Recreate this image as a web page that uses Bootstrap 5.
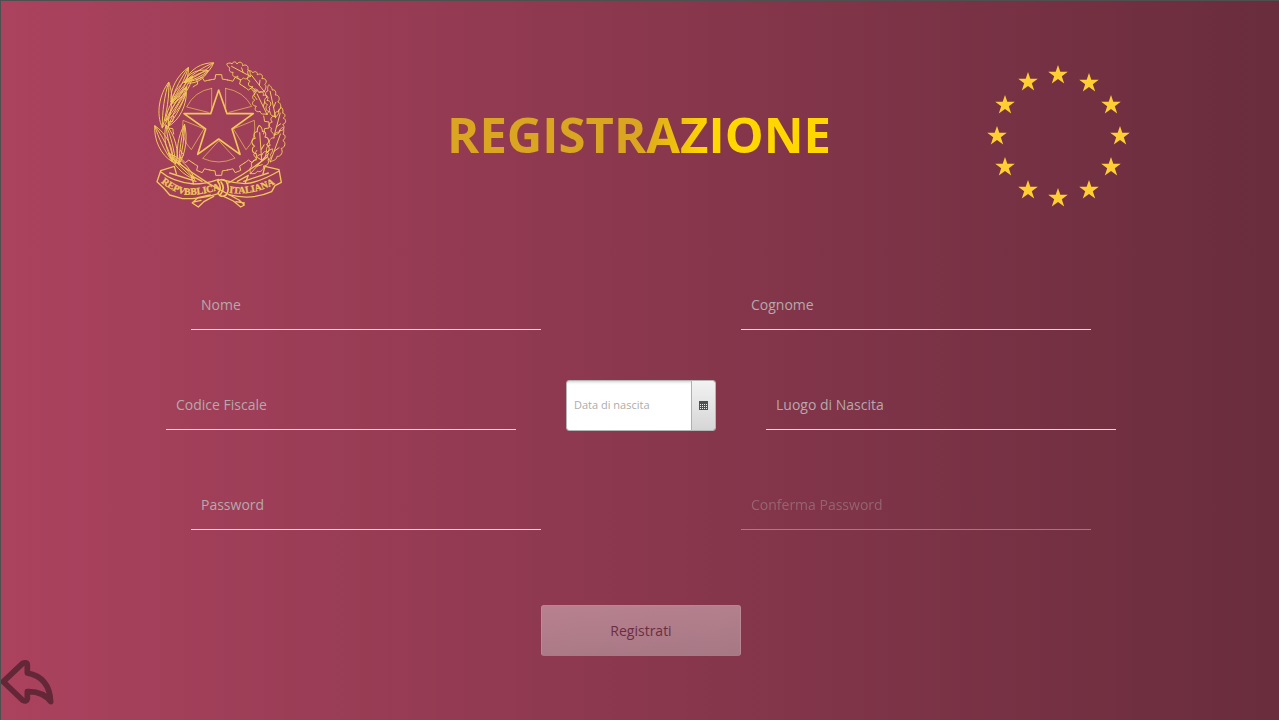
<!DOCTYPE html>
<html lang="it">
<head>
<meta charset="utf-8">
<meta name="viewport" content="width=device-width, initial-scale=1">
<title>Registrazione</title>
<link href="https://cdn.jsdelivr.net/npm/bootstrap@5.3.0/dist/css/bootstrap.min.css" rel="stylesheet">
<style>
body { font-family: "Open Sans", "Noto Sans", sans-serif; background: #87354b; }
.page-shell { background: linear-gradient(to right, #ab425e, #692d3d); border-top: 1px solid #4f4f4f; border-left: 1px solid #4f4f4f; }
.top-band { padding: 48px 11px 0 9px; height: 279px; }
.top-band svg { display: block; margin: 0 auto; }
.page-title { font-size: 49px; line-height: 70px; font-weight: 700; margin: 50px 0 0;
  background: linear-gradient(100deg, #daa520 50%, #ffd700 66%); -webkit-background-clip: text; background-clip: text; color: transparent; }
.form-rows { padding-left: 2px; gap: 50px; }
.field-row { height: 50px; }
.gap-wide { gap: 200px; }
.gap-mid { gap: 50px; }
.line-input { width: 350px; height: 50px; padding: 0 10px; border: 0; border-bottom: 1px solid #efd9df; border-radius: 0; font-size: 14px; color: #fff; }
.line-input, .line-input:focus, .line-input:disabled { background: transparent; box-shadow: none; }
.line-input::placeholder { color: #b5a9ac; opacity: 1; }
.line-input:disabled { opacity: .4; border-color: #efd9df; }
.date-group { width: 150px; height: 51px; border: 1px solid #b5b5b5; border-radius: 3px; overflow: hidden; }
.date-group .form-control { border: 0; border-radius: 0; font-size: 11px; padding: 0 7px; box-shadow: inset 0 3px 3px -2px #ccc; }
.date-group .form-control::placeholder { color: #acacac; opacity: 1; }
.date-group .btn { width: 24px; border: 0; border-left: 1px solid #b0b0b0; border-radius: 0; background: linear-gradient(#f2f2f2, #d6d6d6); }
.send-row { padding: 25px 0 0; }
.send-btn { width: 200px; height: 51px; font-size: 14px; border-radius: 3px; }
.send-btn:disabled { color: #6b2e40; opacity: 1; border: 1px solid rgba(200,150,162,.5); border-bottom-color: #a47c87; background: linear-gradient(rgba(226,200,207,.5), rgba(200,186,190,.5)); }
.back-btn { line-height: 0; }
.crest-line { fill: none; stroke: #f3c55b; stroke-width: 4; stroke-linejoin: round; stroke-linecap: round; }
.crest-line use { stroke-width: 1px; }
.crest-line .wedges { stroke-width: 2; }
.crest-text { font: 700 29px "Liberation Serif", serif; fill: #f3c55b; stroke: #f3c55b; stroke-width: 1; }
</style>
</head>
<body>
<div class="page-shell min-vh-100 d-flex flex-column">
  <header class="top-band row g-0">
    <div class="col-4">
      <svg width="150" height="170" viewBox="0 0 450 510" role="img" aria-label="Emblema della Repubblica Italiana">
        <defs>
          <path id="tooth" d="M-27-135Q-19-137-11-137.500L-9-151H9L11-137.500Q19-137 27-135" vector-effect="non-scaling-stroke"/>
          <g id="olive"><path d="M0 0C-24-28-20-72 0-100C20-72 24-28 0 0Z" vector-effect="non-scaling-stroke"/><path d="M0 0C-7-35-6-70 0-100C7-70 7-35 0 0" vector-effect="non-scaling-stroke"/></g>
          <g id="oak"><path d="M0 0C-8-8-20-6-16-20C-32-22-32-38-20-42C-34-50-28-64-16-64C-24-76-14-84-8-82C-8-94 0-100 0-100C0-100 10-94 9-82C18-84 24-74 16-66C30-64 32-50 20-44C32-38 30-22 16-20C18-8 8-6 0 0Z" vector-effect="non-scaling-stroke"/><path d="M0 0V-80M0-30L12-44" vector-effect="non-scaling-stroke"/></g>
          <path id="mottoLeft" d="M48 400Q86 430 120 437Q172 440 226 420"/>
          <path id="mottoRight" d="M252 431Q330 444 412 391"/>
        </defs>
        <g class="crest-line">
          <path stroke-width="5" d="M221 123L246 194H325L261 240L285 316L221 270L158 316L182 240L117 194H197Z"/>
          <g class="wedges">
            <path d="M200 118V187M200 118Q148 127 125 174L190 190M242 118V187M242 118Q296 127 320 172L252 190"/>
            <path d="M176 239L114 214Q106 270 139 302L176 241M266 239L328 214Q336 270 303 302L266 241"/>
            <path d="M221 276L173 328Q221 350 269 328Z"/>
          </g>
          <g transform="translate(221 228)">
            <use href="#tooth"/><use href="#tooth" transform="rotate(22.500)"/><use href="#tooth" transform="rotate(-22.500)"/>
            <use href="#tooth" transform="rotate(45)"/><use href="#tooth" transform="rotate(90)"/><use href="#tooth" transform="rotate(-90)"/>
            <use href="#tooth" transform="rotate(135)"/><use href="#tooth" transform="rotate(-135)"/>
            <use href="#tooth" transform="rotate(157.500)"/><use href="#tooth" transform="rotate(-157.500)"/><use href="#tooth" transform="rotate(180)"/>
          </g>
          <use href="#olive" transform="translate(122 96) rotate(57)"/>
          <use href="#olive" transform="translate(118 100) rotate(64) scale(.9 .8)"/>
          <use href="#olive" transform="translate(78 158) rotate(27) scale(.9 1.150)"/>
          <use href="#olive" transform="translate(78 165) rotate(38) scale(.8 1.050)"/>
          <use href="#olive" transform="translate(52 236) rotate(8) scale(1.100 1.380)"/>
          <use href="#olive" transform="translate(70 232) rotate(28) scale(.9 1.150)"/>
          <use href="#olive" transform="translate(62 215) rotate(32) scale(.8 1.200)"/>
          <use href="#olive" transform="translate(82 338) rotate(-26) scale(1 1.200)"/>
          <use href="#olive" transform="translate(92 344) rotate(-14) scale(.9 1.200)"/>
          <use href="#olive" transform="translate(102 345) rotate(8) scale(.7 1.200)"/>
          <use href="#olive" transform="translate(148 390) rotate(-45) scale(.7 1.100)"/>
          <use href="#oak" transform="translate(316 82) rotate(-62) scale(.85 .8)"/>
          <use href="#oak" transform="translate(358 128) rotate(-38) scale(.9 .8)"/>
          <use href="#oak" transform="translate(392 205) rotate(-12) scale(.8 1)"/>
          <use href="#oak" transform="translate(366 196) rotate(-26) scale(.9 .85)"/>
          <use href="#oak" transform="translate(388 258) rotate(15) scale(.8 .85)"/>
          <use href="#oak" transform="translate(376 338) rotate(20) scale(.85 1.100)"/>
          <use href="#oak" transform="translate(350 334) rotate(-4) scale(.9 1.050)"/>
          <use href="#oak" transform="translate(316 374) rotate(42) scale(.7 1)"/>
          <path d="M76 325Q130 365 190 403L282 453L298 468L287 474L265 456L236 442M366 325Q315 365 250 402M206 442L178 457L160 474L142 462L158 446L196 438M142 460L168 454M273 458L298 462"/>
          <path d="M47 365L88 352L94 374M47 365L36 398L56 417L74 438L112 449Q160 450 202 439L220 434M47 368Q82 398 146 405Q182 405 221 391M74 372L153 397M146 405L138 379L171 397"/>
          <path d="M402 362L360 352L354 374M402 362L409 400L390 410L380 428Q320 455 251 437M402 366Q344 400 300 404Q264 402 230 392M370 372L296 397M300 404L310 379L277 397"/>
          <path stroke-width="5" d="M218 396Q230 387 244 397Q256 421 243 438Q226 448 219 432Q233 418 218 396ZM228 399Q242 417 227 436"/>
        </g>
        <text class="crest-text"><textPath href="#mottoLeft">REPVBBLICA</textPath></text>
        <text class="crest-text"><textPath href="#mottoRight">ITALIANA</textPath></text>
      </svg>
    </div>
    <div class="col-4 text-center"><h1 class="page-title">REGISTRAZIONE</h1></div>
    <div class="col-4">
      <svg width="160" height="174" viewBox="-80 -87 160 174" fill="#ffce33" role="img" aria-label="Stelle dell'Unione Europea">
        <defs><path id="euStar" d="M0-10L2.300-3.200H9.800L3.800 1.200L6.200 8.500L0 4L-6.200 8.500L-3.800 1.200L-9.800-3.200H-2.300Z"/></defs>
        <use href="#euStar" x="0" y="-61"/><use href="#euStar" x="31" y="-53"/><use href="#euStar" x="53" y="-31"/>
        <use href="#euStar" x="62" y="0"/><use href="#euStar" x="53" y="31"/><use href="#euStar" x="31" y="54"/>
        <use href="#euStar" x="0" y="62"/><use href="#euStar" x="-30" y="54"/><use href="#euStar" x="-53" y="31"/>
        <use href="#euStar" x="-61" y="0"/><use href="#euStar" x="-53" y="-31"/><use href="#euStar" x="-30" y="-54"/>
      </svg>
    </div>
  </header>
  <form class="form-rows d-flex flex-column">
    <div class="field-row d-flex justify-content-center gap-wide">
      <input class="form-control line-input" type="text" placeholder="Nome" aria-label="Nome">
      <input class="form-control line-input" type="text" placeholder="Cognome" aria-label="Cognome">
    </div>
    <div class="field-row d-flex justify-content-center gap-mid">
      <input class="form-control line-input" type="text" placeholder="Codice Fiscale" aria-label="Codice Fiscale">
      <div class="date-group d-flex">
        <input class="form-control" type="text" placeholder="Data di nascita" aria-label="Data di nascita">
        <button class="btn p-0 flex-shrink-0 d-flex align-items-center justify-content-center" type="button" aria-label="Apri calendario">
          <svg width="9" height="9" viewBox="0 0 9 9" shape-rendering="crispEdges"><path fill="#505050" d="M0 0h9v9H0z"/><path stroke="#eee" stroke-dasharray="1 1" d="M1 3.500h7M1 5.500h7M1 7.500h7"/></svg>
        </button>
      </div>
      <input class="form-control line-input" type="text" placeholder="Luogo di Nascita" aria-label="Luogo di Nascita">
    </div>
    <div class="field-row d-flex justify-content-center gap-wide">
      <input class="form-control line-input" type="password" placeholder="Password" aria-label="Password">
      <input class="form-control line-input" type="password" placeholder="Conferma Password" aria-label="Conferma Password" disabled>
    </div>
    <div class="send-row text-center"><button class="btn send-btn" type="submit" disabled>Registrati</button></div>
  </form>
  <div class="pt-1">
    <button class="btn back-btn p-0 border-0" type="button" aria-label="Indietro">
      <svg width="56" height="50" viewBox="3 27 168 150" fill="none" stroke="#642738" stroke-width="17" stroke-linejoin="round"><path d="M10 92L68 37Q82 32 82 42V66Q148 78 152 152Q128 120 82 122V143Q80 154 68 148Z"/></svg>
    </button>
  </div>
</div>
<script src="https://cdn.jsdelivr.net/npm/bootstrap@5.3.0/dist/js/bootstrap.bundle.min.js"></script>
</body>
</html>
